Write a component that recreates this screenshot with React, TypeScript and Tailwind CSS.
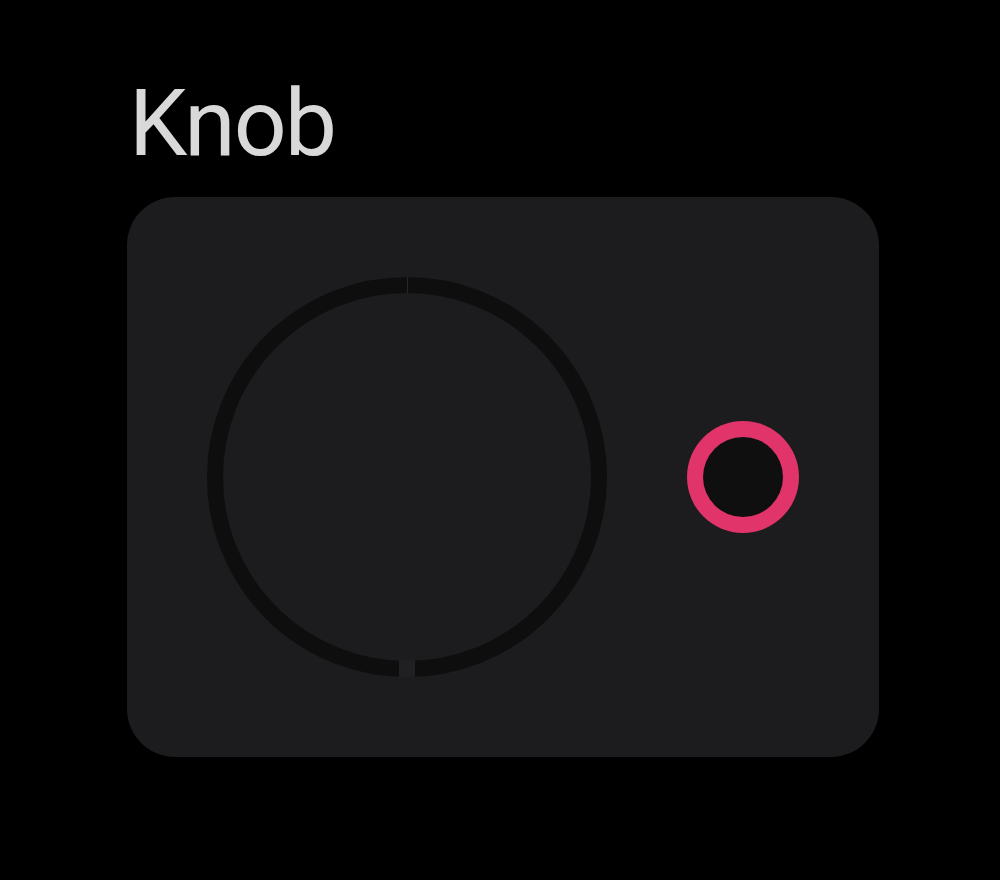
export default function App() {
  return (
    <div className="min-h-[880px] w-[1000px] bg-black pl-[127px] pt-[76px]">
      <h1
        className="text-[93px] leading-[96px] tracking-[-2px] text-[#d9d9d9] pl-[2px]"
        style={{ fontFamily: "Roboto, 'Liberation Sans', sans-serif" }}
      >
        Knob
      </h1>
      <div className="mt-[25px] flex w-[752px] items-center gap-[80px] rounded-[48px] bg-[#1c1c1e] px-[80px] py-[80px]">
        {/* dial track */}
        <svg width="400" height="400" viewBox="0 0 400 400" className="shrink-0">
          <circle cx="200" cy="200" r="192" fill="none" stroke="#0e0e0f" strokeWidth="16" />
          <line x1="200.5" y1="0" x2="200.5" y2="16" stroke="#1d2b2b" strokeWidth="1" />
          <rect x="192" y="383" width="16" height="18" fill="#202022" />
        </svg>
        {/* indicator handle */}
        <div className="flex h-[112px] w-[112px] shrink-0 items-center justify-center rounded-full bg-[#e0346a]">
          <div className="h-[80px] w-[80px] rounded-full bg-[#0f0f0f]" />
        </div>
      </div>
    </div>
  );
}
